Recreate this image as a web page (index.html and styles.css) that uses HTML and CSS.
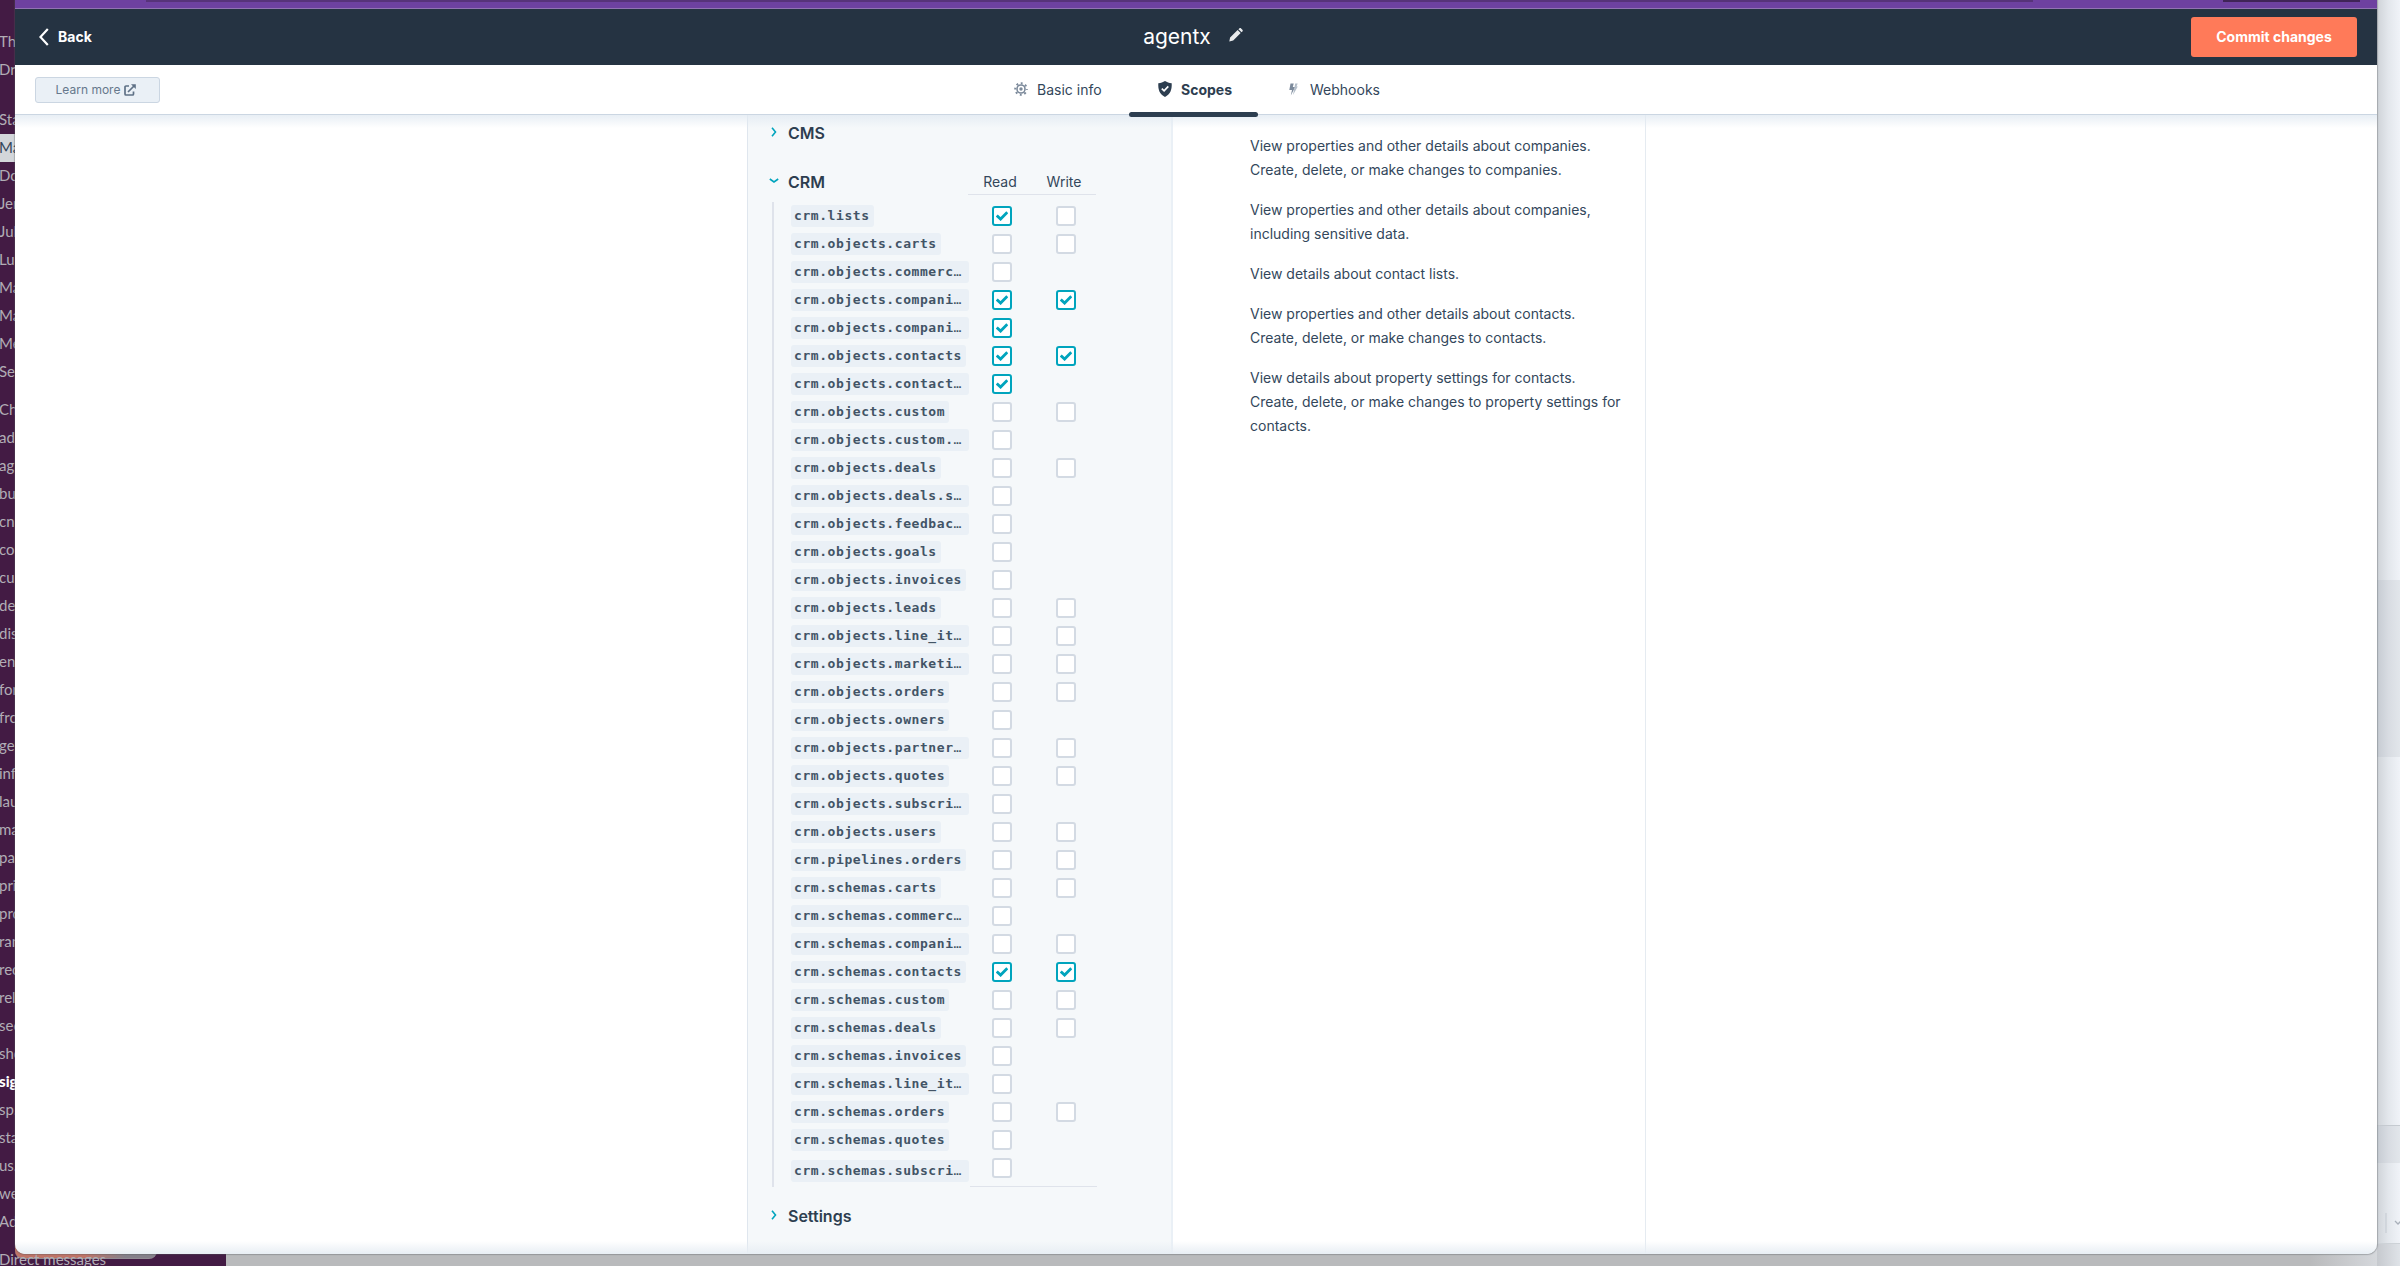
FILE: index.html
```html
<!DOCTYPE html>
<html lang="en">
<head>
    <meta charset="UTF-8">
    <meta name="viewport" content="width=device-width, initial-scale=1.0">
    <title>agentx - Scopes</title>
    <link rel="stylesheet" href="styles.css">
</head>
<body>
    <!-- Windows behind the modal -->
    <div class="backdrop">
        <div class="chip"></div>
        <div class="sidebar" id="sidebar"></div>
        <div class="behind-right">
            <div class="band band-large"></div>
            <div class="band band-small"></div>
            <div class="behind-line"></div>
            <svg class="behind-caret" width="2" height="20" viewBox="0 0 2 20"><path d="M1 0v20" stroke="#c3c9d0"/></svg>
            <svg class="behind-chevron" width="8" height="6" viewBox="0 0 8 6"><path d="M1 1l3 3 3-3" fill="none" stroke="#a9b0ba" stroke-width="1.300"/></svg>
        </div>
    </div>

    <div class="modal">
        <div class="app-strip"></div>

        <header class="header">
            <a class="back">
                <svg width="10" height="18" viewBox="0 0 10 18"><path d="M8.8 1L1.4 9l7.4 8" fill="none" stroke="#fff" stroke-width="2.2"/></svg>
                <span>Back</span>
            </a>
            <div class="title">
                <span class="app-name">agentx</span>
                <svg width="14" height="14" viewBox="0 0 14 14"><path d="M.3 13.4l.8-4L8.6 2l3.1 3.1-7.5 7.4zM9.4 1.200l.9-.8c.5-.5 1.300-.4 1.800 0l1.300 1.300c.5.5.5 1.300 0 1.800l-.8.8z" fill="#e9ebed"/></svg>
            </div>
            <button class="commit">Commit changes</button>
        </header>

        <nav class="tabbar">
            <a class="learn-more">
                <span>Learn more</span>
                <svg width="12" height="12" viewBox="0 0 12 12" fill="none" stroke="#5f7186" stroke-width="1.700"><path d="M5 2H2a1 1 0 0 0-1 1v7a1 1 0 0 0 1 1h6.500a1 1 0 0 0 1-1V7.500M4 8L10 2"/><path d="M7 .2h4.800V5z" fill="#5f7186" stroke="none"/></svg>
            </a>
            <div class="tabs">
                <a class="tab tab-info">
                    <svg width="14" height="14" viewBox="0 0 14 14" fill="none" stroke="#7c8a9b"><circle cx="7" cy="7" r="4" stroke-width="1.600"/><circle cx="7" cy="7" r="5.800" stroke-width="2" stroke-dasharray="1.900 2.655" stroke-dashoffset=".95"/><circle cx="7" cy="7" r="1.700" fill="#7c8a9b" stroke="none"/></svg>
                    <span class="tab-label">Basic info</span>
                </a>
                <a class="tab tab-scopes active">
                    <svg width="14" height="16" viewBox="0 0 14 16"><path d="M7 0c2 1.300 4 1.900 6.700 2.200C14 8.500 12.600 13 7 16 1.400 13 0 8.500.3 2.200 3 1.900 5 1.300 7 0z" fill="#2d3e50"/><path d="M3.800 7.600l2.300 2.200 4.200-4.400" fill="none" stroke="#fff" stroke-width="1.700"/></svg>
                    <span class="tab-label">Scopes</span>
                </a>
                <a class="tab tab-webhooks">
                    <svg width="9" height="13" viewBox="0 0 9 13"><path d="M1.500.5h3.200L3.800 4h2.400L1.800 12.500 3 7H.3z" fill="#7c8a9b"/><path d="M6.200.5h2.500L7.500 3.500h1.300L4 12z" fill="#b4bec9"/></svg>
                    <span class="tab-label">Webhooks</span>
                </a>
            </div>
        </nav>

        <main class="content">
            <section class="scopes">
                <div class="group">
                    <svg width="10" height="10" viewBox="0 0 10 10"><path d="M3 .8L6.500 5 3 9.200" fill="none" stroke="#00a4bd" stroke-width="1.600"/></svg>
                    <h3>CMS</h3>
                </div>
                <div class="group group-open">
                    <svg width="10" height="10" viewBox="0 0 10 10"><path d="M.8 3L5 6 9.200 3" fill="none" stroke="#00a4bd" stroke-width="1.600"/></svg>
                    <h3>CRM</h3>
                    <div class="columns">
                        <span>Read</span>
                        <span>Write</span>
                    </div>
                </div>
                <div class="scope-list" id="scopeList"></div>
                <div class="group group-settings">
                    <svg width="10" height="10" viewBox="0 0 10 10"><path d="M3 .8L6.500 5 3 9.200" fill="none" stroke="#00a4bd" stroke-width="1.600"/></svg>
                    <h3>Settings</h3>
                </div>
            </section>

            <section class="details">
                <p>View properties and other details about companies.<br>Create, delete, or make changes to companies.</p>
                <p>View properties and other details about companies,<br>including sensitive data.</p>
                <p>View details about contact lists.</p>
                <p>View properties and other details about contacts.<br>Create, delete, or make changes to contacts.</p>
                <p>View details about property settings for contacts.<br>Create, delete, or make changes to property settings for<br>contacts.</p>
            </section>
        </main>
    </div>

    <script>
        // name, read, write: 1 = checked, 0 = unchecked, missing = not available
        const scopes = [
            ['crm.lists', 1, 0],
            ['crm.objects.carts', 0, 0],
            ['crm.objects.commerc…', 0],
            ['crm.objects.compani…', 1, 1],
            ['crm.objects.compani…', 1],
            ['crm.objects.contacts', 1, 1],
            ['crm.objects.contact…', 1],
            ['crm.objects.custom', 0, 0],
            ['crm.objects.custom.…', 0],
            ['crm.objects.deals', 0, 0],
            ['crm.objects.deals.s…', 0],
            ['crm.objects.feedbac…', 0],
            ['crm.objects.goals', 0],
            ['crm.objects.invoices', 0],
            ['crm.objects.leads', 0, 0],
            ['crm.objects.line_it…', 0, 0],
            ['crm.objects.marketi…', 0, 0],
            ['crm.objects.orders', 0, 0],
            ['crm.objects.owners', 0],
            ['crm.objects.partner…', 0, 0],
            ['crm.objects.quotes', 0, 0],
            ['crm.objects.subscri…', 0],
            ['crm.objects.users', 0, 0],
            ['crm.pipelines.orders', 0, 0],
            ['crm.schemas.carts', 0, 0],
            ['crm.schemas.commerc…', 0],
            ['crm.schemas.compani…', 0, 0],
            ['crm.schemas.contacts', 1, 1],
            ['crm.schemas.custom', 0, 0],
            ['crm.schemas.deals', 0, 0],
            ['crm.schemas.invoices', 0],
            ['crm.schemas.line_it…', 0],
            ['crm.schemas.orders', 0, 0],
            ['crm.schemas.quotes', 0],
            ['crm.schemas.subscri…', 0]
        ];

        const check = '<svg width="12" height="10" viewBox="0 0 12 10"><path d="M.8 4.500l3.800 3.600L11.300 1.200" fill="none" stroke="#00a4bd" stroke-width="2.800"/></svg>';

        function checkbox(value) {
            if (value === undefined) return '<span></span>';
            return `<span class="checkbox${value ? ' checked' : ''}">${value ? check : ''}</span>`;
        }

        document.getElementById('scopeList').innerHTML = scopes.map(([name, read, write]) => `
            <div class="scope">
                <div class="scope-name"><code class="${name.endsWith('…') ? 'cut' : ''}">${name.replace('…', '<span class="dots">…</span>')}</code></div>
                ${checkbox(read)}
                ${checkbox(write)}
            </div>`).join('');

        // Channel list, only its first letters show beside the modal
        const groups = [
            ['Th', 'Dr'],
            ['Sta', 'Ma', 'Do', 'Jer', 'Jul', 'Lu', 'Ma', 'Ma', 'Me', 'Se'],
            ['Ch', 'ad', 'ag', 'bu', 'cn', 'co', 'cu', 'de', 'dis', 'en', 'for', 'fro', 'ge', 'inf', 'lau', 'ma', 'pa', 'pri', 'pro', 'ran', 'rec', 'rel', 'sec', 'sho', 'sig', 'sp.', 'sta', 'us.', 'we', 'Ad'],
            ['Direct messages']
        ];
        document.getElementById('sidebar').innerHTML = groups.map((items, g) =>
            `<div class="channels">${items.map((text, i) => {
                const state = g === 1 && i === 1 ? ' selected' : text === 'sig' ? ' unread' : '';
                return `<div class="channel${state}">${text}</div>`;
            }).join('')}</div>`).join('');
    </script>
</body>
</html>
```
FILE: styles.css
```css
:root {
    --navy: #253342;
    --text: #33475b;
    --teal: #00a4bd;
    --panel: #f5f8fa;
    --border: #cbd6e2;
    --pill: #eaf0f6;
}
* {
    box-sizing: border-box;
}
body {
    margin: 0;
    height: 1266px;
    overflow: hidden;
    position: relative;
    font-family: Inter, "Open Sans", sans-serif;
    font-size: 14px;
    color: var(--text);
}

/* Backdrop */
.backdrop {
    position: absolute;
    inset: 0;
    overflow: hidden;
    background: linear-gradient(to right, #431b44 226px, #b9babc 226px, #b9babc 2310px, #dfe2e7 2400px);
}
.sidebar {
    position: relative;
    width: 226px;
    height: 1266px;
    padding-top: 28px;
    color: #b1adb5;
    font: 15px/27px Lato, sans-serif;
}
.channels {
    margin-bottom: 22px;
}
.channels + .channels {
    margin-bottom: 10px;
}
.channel {
    height: 28px;
    text-indent: -1px;
    white-space: nowrap;
}
.selected {
    background: #d3d6da;
    color: #33475b;
}
.unread {
    color: #fff;
    font-weight: 900;
}
.chip {
    position: absolute;
    left: 15px;
    top: 1244px;
    width: 142px;
    height: 15px;
    border-radius: 0 0 8px 8px;
    border-bottom: 1px solid #918b93;
    background: linear-gradient(to right, #c07468 70px, #85808a 110px);
}
.behind-right {
    position: absolute;
    left: 2377px;
    top: 0;
    width: 23px;
    height: 1266px;
    background: linear-gradient(to right, #cfd3d8, #e3e7ec 50%, #f0f3f8);
}
.band {
    position: absolute;
    left: 0;
    width: 23px;
    background: linear-gradient(to right, #c6cbd2, #d8dce2 50%, #e2e6eb);
}
.band-large {
    top: 580px;
    height: 177px;
}
.band-small {
    top: 1125px;
    height: 38px;
    border-top: 1px solid #c5cad0;
}
.behind-line {
    position: absolute;
    left: 0;
    top: 1243px;
    width: 23px;
    height: 23px;
    border-top: 1px solid #cdd2d7;
    background: linear-gradient(to right, #c6c9ce, #dfe3e8);
}
.behind-caret {
    position: absolute;
    left: 8px;
    top: 1213px;
}
.behind-chevron {
    position: absolute;
    left: 17px;
    top: 1220px;
}

/* Modal */
.modal {
    position: relative;
    width: 2362px;
    height: 1254px;
    margin-left: 15px;
    display: flex;
    flex-direction: column;
    background: #fff;
    border-radius: 0 0 10px 10px;
    overflow: hidden;
    box-shadow: 0 0 1px 1px rgba(80, 85, 92, .35);
}
.modal::after {
    content: "";
    position: absolute;
    left: 0;
    right: 0;
    bottom: 0;
    height: 13px;
    background: linear-gradient(rgba(234, 240, 246, 0), #e8eef4);
}
.app-strip {
    flex: none;
    height: 9px;
    background:
        linear-gradient(#573379, #573379) 131px 0 / 1887px 2px no-repeat,
        linear-gradient(#402457, #402457) 2208px 0 / 137px 2px no-repeat,
        #6e41a0;
    border-bottom: 1px solid #9273b3;
}
.header {
    flex: none;
    height: 56px;
    display: grid;
    grid-template-columns: 1fr auto 1fr;
    align-items: center;
    padding: 0 20px 1px 24px;
    background: var(--navy);
    color: #fff;
}
.back {
    display: flex;
    align-items: center;
    gap: 9px;
    font-size: 14px;
    font-weight: 700;
}
.title {
    display: flex;
    align-items: center;
    gap: 18px;
    padding-right: 10px;
}
.title svg {
    margin-bottom: 3px;
}
.app-name {
    font-size: 21px;
}
.commit {
    justify-self: end;
    width: 166px;
    height: 40px;
    padding: 0 0 1px;
    border: none;
    border-radius: 3px;
    background: #ff7a59;
    color: #fff;
    font: 700 14px Inter, sans-serif;
}

/* Tabs */
.tabbar {
    flex: none;
    position: relative;
    z-index: 1;
    display: flex;
    align-items: center;
    height: 50px;
    padding-left: 20px;
    border-bottom: 1px solid var(--border);
    background: #fff;
}
.tabbar::after {
    content: "";
    position: absolute;
    left: 0;
    right: 0;
    top: 50px;
    height: 13px;
    background: linear-gradient(rgba(226, 234, 242, .8), rgba(234, 240, 246, 0));
}
.learn-more {
    display: flex;
    align-items: center;
    justify-content: center;
    gap: 4px;
    width: 125px;
    height: 26px;
    padding-right: 3px;
    border: 1px solid var(--border);
    border-radius: 3px;
    background: var(--pill);
    color: #66788c;
    font-size: 12px;
}
.tabs {
    display: flex;
    margin-left: 840px;
    height: 49px;
}
.tab {
    position: relative;
    display: flex;
    align-items: center;
    padding-bottom: 1px;
    white-space: nowrap;
}
.tab-info {
    width: 129px;
    padding-left: 14px;
    gap: 9px;
}
.tab-scopes {
    width: 129px;
    padding-left: 29px;
    gap: 9px;
}
.tab-webhooks {
    padding-left: 31px;
    gap: 12px;
}
.active {
    font-weight: 700;
    color: #2d3e50;
}
.active::after {
    content: "";
    position: absolute;
    z-index: 2;
    left: 0;
    bottom: -3px;
    width: 129px;
    height: 5px;
    border-radius: 3px;
    background: #2d3e50;
}

/* Content */
.content {
    flex: 1;
    display: flex;
}
.scopes {
    width: 426px;
    margin-left: 732px;
    padding-left: 24px;
    background: var(--panel);
    border-left: 1px solid #dfe6ee;
    border-right: 2px solid var(--pill);
}
.group {
    display: flex;
    align-items: center;
    height: 36px;
    margin-left: -3px;
    gap: 9px;
}
.group svg {
    margin-bottom: 2px;
}
.group h3 {
    margin: 0;
    font-size: 16px;
    font-weight: 600;
    color: #2d3e50;
}
.group-open {
    margin-top: 13px;
}
.group-settings {
    margin-top: 11px;
}
.columns {
    display: grid;
    grid-template-columns: 64px 64px;
    width: 128px;
    height: 30px;
    margin: 0 75px 5px auto;
    border-bottom: 1px solid #dfe3eb;
    line-height: 34px;
    text-align: center;
}
.scope-list {
    width: 325px;
    height: 985px;
    margin-top: 2px;
    border-left: 2px solid #dfe3eb;
    background: linear-gradient(#dfe3eb, #dfe3eb) 100% 100% / 127px 1px no-repeat;
}
.scope {
    display: grid;
    grid-template-columns: 217px 64px 20px;
    align-items: center;
    height: 28px;
    padding-left: 17px;
}
.scope:last-child .scope-name {
    padding-top: 6px;
}
.scope-name {
    display: flex;
}
.scope-name code {
    height: 22px;
    padding: 0 4px 0 3px;
    border-radius: 3px;
    background: var(--pill);
    color: #425466;
    font: 700 13px/22px "DejaVu Sans Mono", monospace;
    letter-spacing: .57px;
    white-space: nowrap;
}
.scope-name .cut {
    width: 178px;
}
.dots {
    font-weight: 400;
}
.checkbox {
    display: flex;
    align-items: center;
    justify-content: center;
    width: 20px;
    height: 20px;
    margin-left: -16.500px;
    border: 2px solid #d3dae3;
    border-radius: 3px;
    background: #fff;
}
.checked {
    border-color: var(--teal);
}
.details {
    width: 473px;
    padding: 19px 0 0 77px;
    border-right: 1px solid #e5ebf1;
    line-height: 24px;
    white-space: nowrap;
}
.details p {
    margin: 0 0 16px;
}
```
